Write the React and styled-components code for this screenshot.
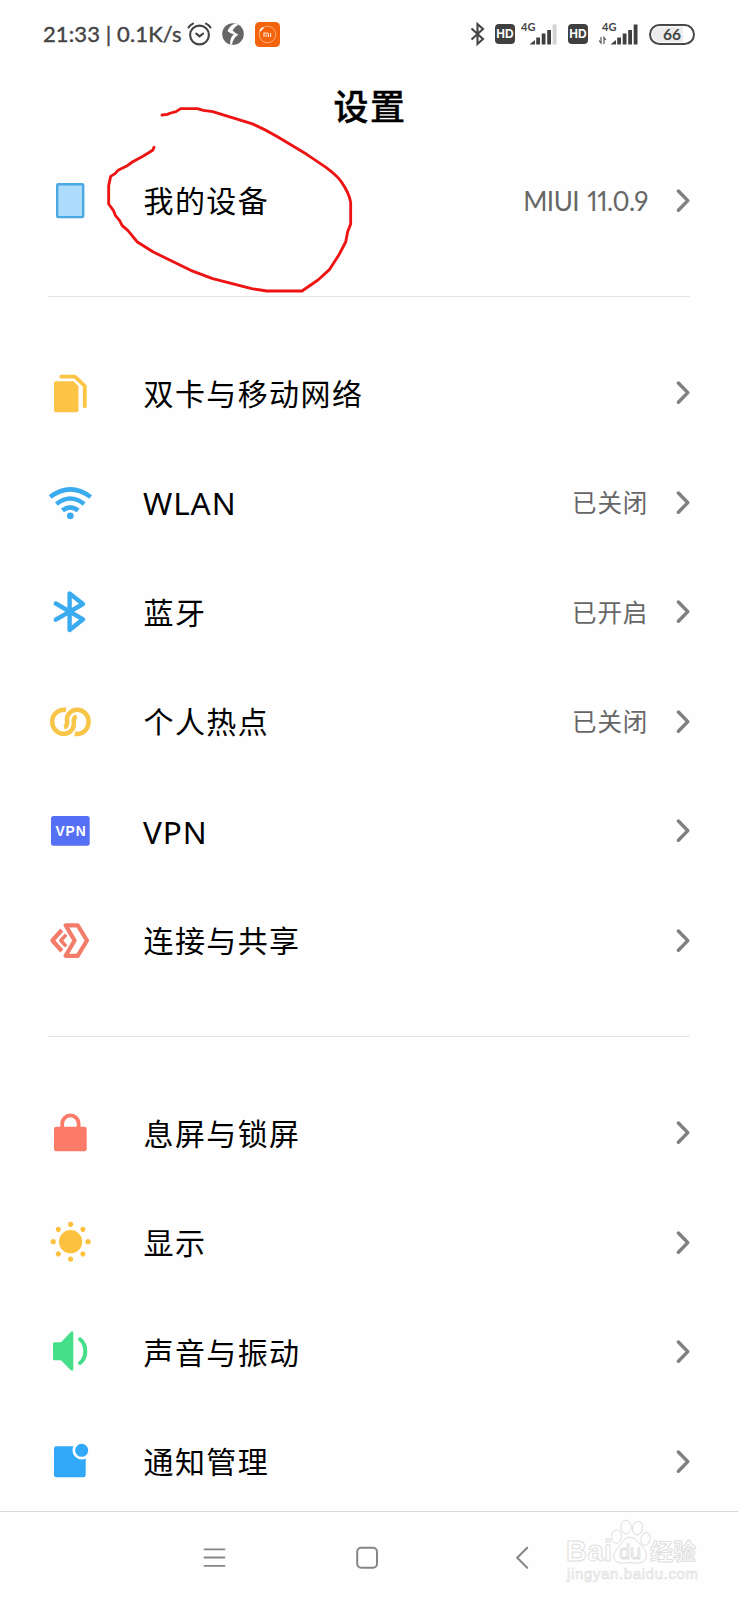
import React from "react";
import styled, { createGlobalStyle } from "styled-components";

const GlobalStyle = createGlobalStyle`
  * {
    box-sizing: border-box;
  }

  body {
    margin: 0;
    background: #fefefe;
    font-family: "Noto Sans", "Noto Sans CJK SC", sans-serif;
    color: #000;
  }
`;

const Screen = styled.div`
  position: relative;
  display: flex;
  flex-direction: column;
  width: 738px;
  height: 1600px;
  background: #fefefe;
  overflow: hidden;
`;

const StatusBar = styled.header`
  display: flex;
  justify-content: space-between;
  align-items: center;
  flex: none;
  height: 68px;
  padding: 0 43px 0 42px;
  color: #444;
`;

const StatusGroup = styled.div`
  display: flex;
  align-items: center;
`;

const StatusText = styled.span`
  width: 142px;
  margin-right: 3px;
  padding-left: 1px;
  font-family: Lato, sans-serif;
  font-size: 22px;
  font-weight: 400;
  letter-spacing: 0.1px;
  line-height: 30px;
  white-space: pre;
  -webkit-text-stroke: 0.4px #444;
`;

const StatusIcon = styled.svg`
  display: block;
  flex: none;
  overflow: visible;
  margin-left: ${({ $gap }) => $gap || 0}px;
`;

const HdBadge = styled.span`
  display: flex;
  align-items: center;
  justify-content: center;
  width: 20px;
  height: 20px;
  margin-left: ${({ $gap }) => $gap}px;
  border-radius: 4px;
  background: #404040;
  color: #fff;
  font-family: "Liberation Sans", sans-serif;
  font-size: 12px;
  font-weight: bold;
`;

const Battery = styled.span`
  display: flex;
  align-items: center;
  justify-content: center;
  width: 46px;
  height: 21px;
  margin-left: 10px;
  border: 2px solid #484848;
  border-radius: 11px;
  background: linear-gradient(to right, #ececec 75%, #fff 75%);
  box-shadow: inset 0 0 0 1px #fff;
  font-family: Lato, sans-serif;
  font-size: 15.5px;
  font-weight: bold;
`;

const Content = styled.main`
  flex: 1;
  min-height: 0;
  overflow: hidden;
`;

const Title = styled.h1`
  height: 78px;
  margin: 0;
  padding: 12px 0 0 2px;
  font-family: "Noto Sans CJK SC", sans-serif;
  font-size: 35px;
  font-weight: 500;
  letter-spacing: 1.5px;
  line-height: 50px;
  text-align: center;
  -webkit-text-stroke: 0.4px #000;
`;

const Row = styled.div`
  display: flex;
  align-items: center;
  height: 109.5px;
  padding: 0 47px 0 46px;
`;

const RowIcon = styled.svg`
  display: block;
  flex: none;
  width: 48px;
  height: 48px;
`;

const Label = styled.span`
  flex: 1;
  margin-left: ${({ $latin }) => ($latin ? 49 : 49.5)}px;
  padding-top: 1px;
  font-size: ${({ $latin }) => ($latin ? "31.5px" : "30px")};
  letter-spacing: ${({ $latin }) => ($latin ? "0.9px" : "1.4px")};
  line-height: 40px;
`;

const Value = styled.span`
  margin-right: 27px;
  padding-bottom: ${({ $latin }) => ($latin ? 0 : 1)}px;
  color: #666;
  font-family: ${({ $latin }) => ($latin ? "Lato" : '"Noto Sans CJK SC"')}, sans-serif;
  font-size: ${({ $latin }) => ($latin ? "26px" : "24.5px")};
  font-variant-numeric: proportional-nums;
  letter-spacing: ${({ $latin }) => ($latin ? "-0.45px" : "0.8px")};
  word-spacing: ${({ $latin }) => ($latin ? "2px" : "0")};
  line-height: 36px;
`;

const Divider = styled.hr`
  height: 1px;
  margin: 40.5px 48px 41.5px;
  border: 0;
  background: #e4e4e4;
`;

const NavBar = styled.nav`
  display: flex;
  flex: none;
  gap: 128.5px;
  height: 89px;
  padding: 34px 0 0 203px;
  border-top: 1px solid #d9d9d9;
`;

const Scribble = styled.svg`
  position: absolute;
  left: 30px;
  top: 80px;
  width: 400px;
  height: 225px;
`;

const Watermark = styled.svg`
  position: absolute;
  right: 0;
  bottom: 0;
  width: 198px;
  height: 110px;
`;

const DeviceIcon = () => (
  <rect x="11.2" y="7.3" width="26" height="32.8" rx="1" fill="#addcfc" stroke="#4aa9e2" strokeWidth="2.4" />
);

const SimIcon = () => (
  <g fill="#fcc444">
    <path d="M10 12.3H27.5L32.5 17.3V41.3a2 2 0 0 1-2 2H10a2 2 0 0 1-2-2V14.3a2 2 0 0 1 2-2Z" />
    <path d="M15.2 7.6H29L38.8 17V37.2" fill="none" stroke="#fcc444" strokeWidth="3.8" strokeLinecap="round" strokeLinejoin="round" />
  </g>
);

const WifiIcon = () => (
  <g fill="none" stroke="#3aabee" strokeWidth="4.6" strokeLinecap="butt">
    <path d="M4.2 18Q24.3 2.8 44.6 18" />
    <path d="M10.4 25Q24.3 14 38.2 25" />
    <path d="M16.4 31.4Q24.3 25.2 32.2 31.4" />
    <circle cx="24.3" cy="36.8" r="3.4" fill="#3aabee" stroke="none" />
  </g>
);

const BluetoothIcon = () => (
  <path
    d="M9.8 15.5L37 31.3L23.6 42V5.5L37 16L9.8 31.7"
    fill="none"
    stroke="#3aabee"
    strokeWidth="4.4"
    strokeLinecap="round"
    strokeLinejoin="round"
  />
);

// Two linked rings, each one open where the other passes over it
const HotspotIcon = () => (
  <g fill="none" stroke="#f8c548" strokeWidth="4.5">
    <path d="M20 11.8C11.5 10.6 6.2 17 6.2 23.8C6.2 30.8 11.6 35.8 17.4 35.8C23.4 35.8 27.8 31.6 27.8 26.3V22.7C27.8 20.6 28.8 18.8 30.6 18.3" />
    <path d="M28.8 35.8C37.3 37 42.6 30.6 42.6 23.8C42.6 16.8 37.2 11.8 31.4 11.8C25.4 11.8 21 16 21 21.3V24.9C21 27 20 28.8 18.2 29.3" />
  </g>
);

const VpnIcon = () => (
  <>
    <rect x="5" y="9" width="38.7" height="29.7" rx="2.5" fill="#5570f5" />
    <text x="9.6" y="28.8" fill="#fff" fontFamily="Liberation Sans, sans-serif" fontSize="13.8" fontWeight="bold" textLength="30">
      VPN
    </text>
  </>
);

const ShareIcon = () => (
  <g fill="none" stroke="#f27c69" strokeWidth="4.2" strokeLinejoin="round">
    <path d="M19.6 8.3H31.7L41 23.5L31.7 38.8H19.6L28.6 23.5Z" />
    <path d="M15.8 13L6.4 23.5L15.8 34" />
    <path d="M20.2 17.6L14.8 23.5L20.2 29.4" strokeWidth="3.6" />
  </g>
);

const LockIcon = () => (
  <>
    <rect x="8" y="17.8" width="32.7" height="24.4" rx="2.2" fill="#fb7b68" />
    <path d="M16.2 19V14.6a8.2 8.2 0 0 1 16.4 0V19" fill="none" stroke="#fb7b68" strokeWidth="3.8" />
  </>
);

const SunIcon = () => (
  <g fill="#fcc23f">
    <circle cx="24.6" cy="22.7" r="11.6" />
    {[0, 45, 90, 135, 180, 225, 270, 315].map((angle) => (
      <circle key={angle} cx="42" cy="22.7" r="2.6" transform={`rotate(${angle} 24.6 22.7)`} />
    ))}
  </g>
);

const SoundIcon = () => (
  <>
    <path
      d="M8.5 14.2H15L24.3 4.4Q27.3 2 27.3 5V41Q27.3 44 24.3 41.8L15 32.2H8.5Q7 32.2 7 30.7V15.7Q7 14.2 8.5 14.2Z"
      fill="#45df8a"
    />
    <path d="M34 11.3Q39.3 15.5 39.3 23.2T34 35" fill="none" stroke="#45df8a" strokeWidth="4" strokeLinecap="round" />
  </>
);

const NoticeIcon = () => (
  <>
    <rect x="8" y="8.3" width="31.7" height="31" rx="2.2" fill="#31a9f8" />
    <circle cx="35.7" cy="12.3" r="9.2" fill="#fefefe" />
    <circle cx="35.7" cy="12.3" r="6.5" fill="#31a9f8" />
  </>
);

const Chevron = () => (
  <svg width="16" height="26" viewBox="0 0 16 26">
    <path d="M3.4 3L12.8 12.6L3.4 22.2" fill="none" stroke="#808080" strokeWidth="3.5" strokeLinecap="round" strokeLinejoin="round" />
  </svg>
);

const groups = [
  [{ label: "我的设备", icon: DeviceIcon, value: "MIUI 11.0.9", latinValue: true }],
  [
    { label: "双卡与移动网络", icon: SimIcon },
    { label: "WLAN", icon: WifiIcon, value: "已关闭", latin: true },
    { label: "蓝牙", icon: BluetoothIcon, value: "已开启" },
    { label: "个人热点", icon: HotspotIcon, value: "已关闭" },
    { label: "VPN", icon: VpnIcon, latin: true },
    { label: "连接与共享", icon: ShareIcon },
  ],
  [
    { label: "息屏与锁屏", icon: LockIcon },
    { label: "显示", icon: SunIcon },
    { label: "声音与振动", icon: SoundIcon },
    { label: "通知管理", icon: NoticeIcon },
  ],
];

const SettingRow = ({ item }) => {
  const Icon = item.icon;

  return (
    <Row>
      <RowIcon viewBox="0 0 48 48">
        <Icon />
      </RowIcon>
      <Label $latin={item.latin}>{item.label}</Label>
      {item.value && <Value $latin={item.latinValue}>{item.value}</Value>}
      <Chevron />
    </Row>
  );
};

// Five ascending bars with the network type above them
const Signal = ({ gap, level, arrows }) => (
  <StatusIcon $gap={gap} width="37" height="24" viewBox="0 0 37 24">
    <text x="0" y="8.8" fill="#444" fontFamily="Lato, sans-serif" fontSize="11" fontWeight="bold">
      4G
    </text>
    {[4, 7, 11, 14.5, 20].map((height, i) => (
      <path
        key={height}
        d={i === 0 ? "M8.5 22.5L14 18V22.5Z" : `M${10.5 + i * 5.5 - 0.8} 22.5V${22.5 - height}h3.8V22.5Z`}
        fill={i < level ? "#404040" : "#d2d2d2"}
      />
    ))}
    {arrows && <path d="M-1 15V21L-3 18.5M2 22V15.5L4 18" fill="none" stroke="#555" strokeWidth="1.2" />}
  </StatusIcon>
);

const App = () => (
  <>
    <GlobalStyle />
    <Screen>
      <StatusBar>
        <StatusGroup>
          <StatusText>21:33 | 0.1K/s</StatusText>
          <StatusIcon width="26" height="26" viewBox="0 0 26 26" fill="none" stroke="#444" strokeWidth="2.1" strokeLinecap="round">
            <circle cx="12.5" cy="14" r="9.4" />
            <path d="M9.3 12.6L12.5 15.4L16.1 12.6M1.5 6.5Q3 4 6 2.6M23.5 6.5Q22 4 19 2.6" />
          </StatusIcon>
          <StatusIcon $gap={9} width="22" height="22" viewBox="0 0 22 22">
            <circle cx="11" cy="11" r="10.8" fill="#666" />
            <path
              d="M12.8 0.4Q7 3 5.6 8.2Q8.5 10.6 11.8 11.2Q7.6 14.6 8.2 21.4L10 21.8Q10.6 15.6 16.4 11.4Q12.4 9.6 10.6 7.4Q12.4 3.6 16.6 1.8Z"
              fill="#fefefe"
            />
          </StatusIcon>
          <StatusIcon $gap={11} width="25" height="25" viewBox="0 0 25 25">
            <rect width="25" height="25" rx="4.5" fill="#f4640c" />
            <circle cx="12.5" cy="12.5" r="8.3" fill="none" stroke="#ffc08e" strokeWidth="0.8" />
            <path d="M5 9Q6 7 8.4 5.5" fill="none" stroke="#fff" strokeWidth="1.7" />
            <path d="M9 15V11H12.5Q13.4 11 13.4 12V15M11.2 12.8V15M15.6 11V15" fill="none" stroke="#ffe9dc" strokeWidth="1.1" />
          </StatusIcon>
        </StatusGroup>
        <StatusGroup>
          <StatusIcon width="15" height="24" viewBox="0 0 15 24">
            <path d="M1.5 6.5L13 17L7.5 22V2L13 7L1.5 17.5" fill="none" stroke="#444" strokeWidth="2.1" />
          </StatusIcon>
          <HdBadge $gap={10}>HD</HdBadge>
          <Signal gap={6} level={4} />
          <HdBadge $gap={10}>HD</HdBadge>
          <Signal gap={14} level={5} arrows />
          <Battery>66</Battery>
        </StatusGroup>
      </StatusBar>

      <Content>
        <Title>设置</Title>
        {groups.map((items, index) => (
          <React.Fragment key={index}>
            {index > 0 && <Divider />}
            {items.map((item) => (
              <SettingRow key={item.label} item={item} />
            ))}
          </React.Fragment>
        ))}
      </Content>

      <NavBar>
        <svg width="24" height="24" viewBox="0 0 24 24">
          <path d="M1.5 3.3H21.5M1.5 11.5H21.5M1.5 19.8H21.5" stroke="#858585" strokeWidth="1.8" strokeLinecap="round" />
        </svg>
        <svg width="24" height="24" viewBox="0 0 24 24">
          <rect x="1.2" y="1.7" width="19.8" height="20" rx="4" fill="none" stroke="#858585" strokeWidth="2" />
        </svg>
        <svg width="24" height="24" viewBox="0 0 24 24">
          <path d="M19.2 1.8L9.2 11.8L19.2 21.8" fill="none" stroke="#858585" strokeWidth="2" strokeLinecap="round" />
        </svg>
      </NavBar>

      <Scribble viewBox="0 0 1200 675">
        <path
          d="M396 105L412 103L422 99L438 95L452 86L502 86L520 91L548 95L665 131Q700 145 740 169L830 223L888 262Q925 290 935 307Q958 340 962 367V432L953 455L947 486L926 526L899 568L864 600L816 633H710L665 626L548 596L482 571L370 516L322 486L294 452L276 436L269 422L256 406L250 391L236 372V317L242 289L255 281L264 271L292 257L307 246L340 228L368 211L372 202"
          fill="none"
          stroke="#ee1313"
          strokeWidth="8.5"
          strokeLinecap="round"
          strokeLinejoin="round"
        />
      </Scribble>

      <Watermark viewBox="0 0 198 110" fill="#fefefe" stroke="#dedede" strokeWidth="1">
        <text x="26" y="71" fontFamily="Liberation Sans, sans-serif" fontSize="29" fontWeight="bold" textLength="46">
          Bai
        </text>
        <ellipse cx="76.5" cy="46.5" rx="5" ry="6.8" />
        <ellipse cx="86" cy="37" rx="5" ry="6.8" />
        <ellipse cx="97.5" cy="38" rx="5" ry="6.8" transform="rotate(12 97.5 38)" />
        <ellipse cx="105.5" cy="49" rx="4.6" ry="6.4" transform="rotate(15 105.5 49)" />
        <path d="M90 47Q95 47 98.5 52.5L105 60Q109 69 102 72.5Q98 74 90 72.5Q81 74 77 72Q71 68 76 60L82 52.5Q85 47 90 47Z" />
        <text x="79" y="69" fontFamily="Liberation Sans, sans-serif" fontSize="20" textLength="22">
          du
        </text>
        <text x="110" y="70" fontFamily="Noto Sans CJK SC, sans-serif" fontSize="23" fontWeight="bold" textLength="46">
          经验
        </text>
        <text x="27" y="89" fontFamily="Liberation Sans, sans-serif" fontSize="15" strokeWidth="0.7" textLength="131">
          jingyan.baidu.com
        </text>
      </Watermark>
    </Screen>
  </>
);

export default App;
